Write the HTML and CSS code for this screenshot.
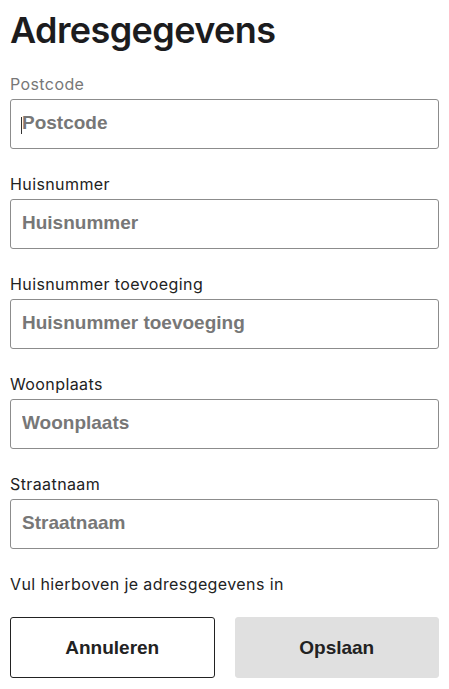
FILE: index.html
```html
<!DOCTYPE html>
<html lang="nl">
<head>
<meta charset="utf-8">
<title>Adresgegevens</title>
<link rel="stylesheet" href="styles.css">
</head>
<body>
<main class="page">
  <h1 class="title">Adresgegevens</h1>
  <form class="form">
    <div class="field">
      <label class="label label-muted" for="postcode">Postcode</label>
      <div class="control">
        <input class="input" id="postcode" type="text" placeholder="Postcode">
        <span class="caret"></span>
      </div>
    </div>
    <div class="field">
      <label class="label" for="huisnummer">Huisnummer</label>
      <div class="control">
        <input class="input" id="huisnummer" type="text" placeholder="Huisnummer">
      </div>
    </div>
    <div class="field">
      <label class="label" for="toevoeging">Huisnummer toevoeging</label>
      <div class="control">
        <input class="input" id="toevoeging" type="text" placeholder="Huisnummer toevoeging">
      </div>
    </div>
    <div class="field">
      <label class="label" for="woonplaats">Woonplaats</label>
      <div class="control">
        <input class="input" id="woonplaats" type="text" placeholder="Woonplaats">
      </div>
    </div>
    <div class="field">
      <label class="label" for="straatnaam">Straatnaam</label>
      <div class="control">
        <input class="input" id="straatnaam" type="text" placeholder="Straatnaam">
      </div>
    </div>
    <p class="hint">Vul hierboven je adresgegevens in</p>
    <div class="actions">
      <button type="button" class="btn btn-outline">Annuleren</button>
      <button type="button" class="btn btn-filled">Opslaan</button>
    </div>
  </form>
</main>
</body>
</html>
```
FILE: styles.css
```css
* { box-sizing: border-box; }
html, body { margin: 0; padding: 0; background: #ffffff; }
body { font-family: Inter, "Noto Sans", sans-serif; color: #222222; }
.page { width: 449px; padding: 8px 10px 0 10px; }
.title {
  margin: 0 0 22px 0;
  font-size: 36px;
  line-height: 44px;
  font-weight: 600;
  color: #1c1c1e;
  letter-spacing: -0.6px;
}
.form { display: flex; flex-direction: column; }
.field { display: flex; flex-direction: column; margin-bottom: 25px; }
.label {
  display: block;
  font-size: 16px;
  line-height: 20px;
  font-weight: 400;
  letter-spacing: 0.4px;
  color: #222222;
  margin-bottom: 5px;
}
.label-muted { color: #777777; }
.control { position: relative; }
.input {
  display: block;
  width: 100%;
  height: 50px;
  margin: 0;
  padding: 0 11px 2px 11px;
  border: 1px solid #8c8c8c;
  border-radius: 3px;
  background: #ffffff;
  font-family: "Liberation Sans", Arial, sans-serif;
  font-size: 19px;
  font-weight: 700;
  color: #222222;
  outline: none;
}
.input::placeholder { color: #777777; opacity: 1; }
.caret {
  position: absolute;
  left: 11px;
  top: 18px;
  width: 1px;
  height: 17px;
  background: #333333;
}
.hint {
  margin: 0 0 23px 0;
  font-size: 16px;
  line-height: 20px;
  letter-spacing: 0.4px;
  color: #222222;
}
.actions { display: flex; gap: 20px; }
.btn {
  flex: 1 1 0;
  height: 61px;
  margin: 0;
  border-radius: 3px;
  font-family: "Liberation Sans", Arial, sans-serif;
  font-size: 19px;
  font-weight: 700;
  color: #222222;
  cursor: pointer;
}
.btn-outline { background: #ffffff; border: 1px solid #222222; }
.btn-filled { background: #e0e0e0; border: 1px solid #e0e0e0; }
```
